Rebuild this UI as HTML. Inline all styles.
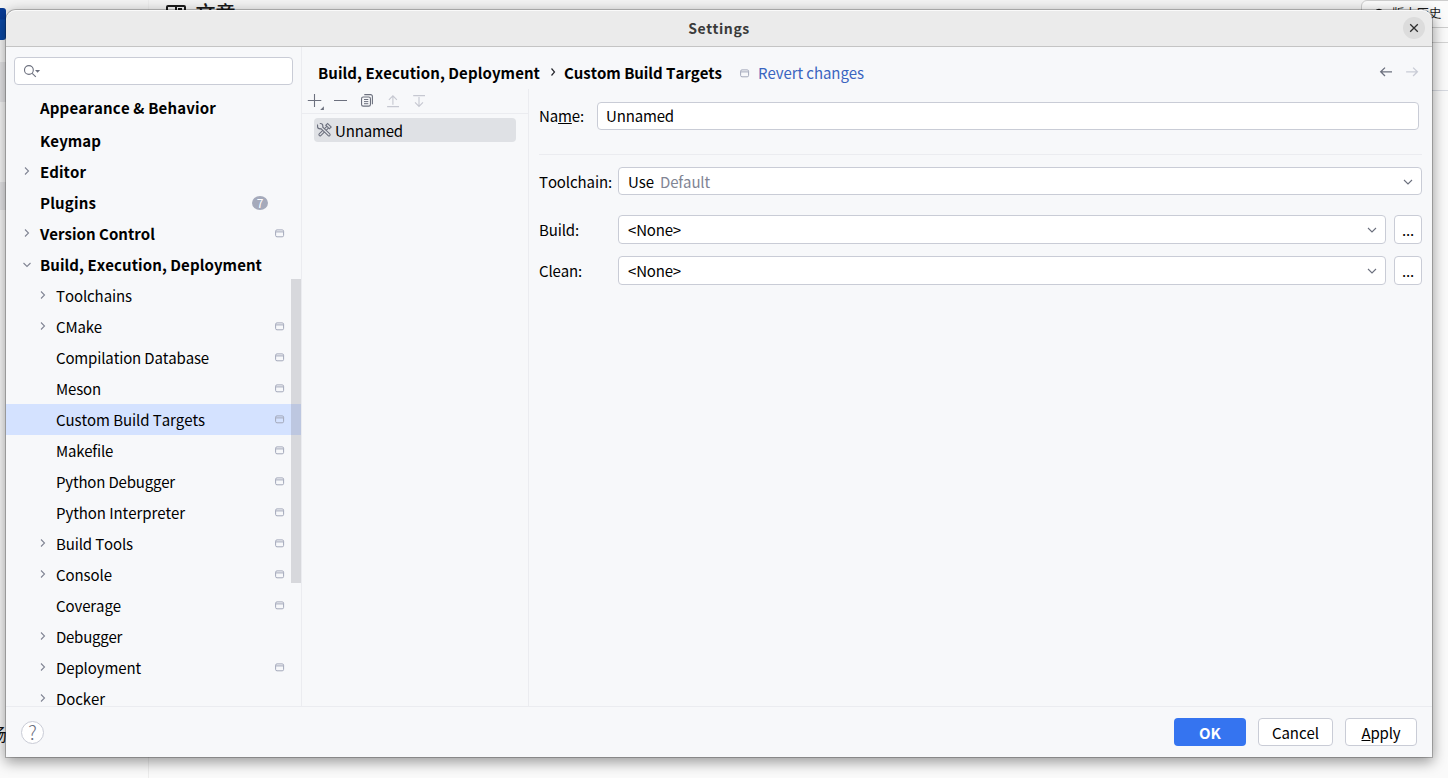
<!DOCTYPE html>
<html lang="en">
<head>
<meta charset="utf-8">
<title>Settings</title>
<style>
*{box-sizing:border-box;margin:0;padding:0}
html,body{width:1448px;height:778px;overflow:hidden;background:#fff}
body{font-family:"Noto Sans CJK SC","Liberation Sans",sans-serif;font-size:15px;color:#000;position:relative;font-kerning:none}
#bg{position:absolute;left:0;top:0;width:1448px;height:778px;background:#fafafa;overflow:hidden}
#bg div{position:absolute}
#dlg{position:absolute;left:6px;top:10px;width:1426px;height:747px;background:#f7f8fa;border-radius:10px 10px 0 0;box-shadow:0 0 0 1px rgba(0,0,0,.22),0 4px 14px 1px rgba(0,0,0,.40);overflow:hidden}
#in{position:absolute;left:-6px;top:-10px;width:1448px;height:778px}
#in div,#in span.t,#in svg{position:absolute}
#title{left:6px;top:10px;width:1426px;height:37px;background:#ebebeb;border-bottom:1px solid #c4c4c4;text-align:center;font-weight:bold;font-size:14px;line-height:37px;color:#3a3a3a;letter-spacing:.55px;box-shadow:inset 0 1px 0 rgba(255,255,255,.75);border-radius:10px 10px 0 0}
.t{white-space:nowrap;line-height:22px;height:22px}
.b{font-weight:bold}
.box{background:#fff;border:1px solid #c9ccd6;border-radius:4px}
.ln{background:#ebecf0}
.btn{height:28px;border-radius:4px;text-align:center;line-height:28px;font-size:15px}
u{text-decoration:underline;text-underline-offset:1px;text-decoration-thickness:1px}
</style>
</head>
<body>
<div id="bg">
  <div style="left:0;top:0;width:1448px;height:12px;background:#f3f3f3"></div>
  <div style="left:148px;top:0;width:1px;height:778px;background:#ececec"></div>
  <div style="left:0;top:8px;width:5.500px;height:32px;background:linear-gradient(#073a94 0,#073a94 11px,#0a49a6 12px);border-radius:0 3px 3px 0"></div>
  <div style="left:166px;top:5px;width:20px;height:20px;border:2px solid #1a1a1a;border-radius:2px"></div>
  <div style="left:175px;top:5px;width:2px;height:20px;background:#1a1a1a"></div>
  <div style="left:178px;top:8px;width:4px;height:2px;background:#1a1a1a"></div>
  <div style="left:195.500px;top:3px;font-size:20px;line-height:20px;color:#1a1a1a;white-space:nowrap;font-weight:500">文章</div>
  <div style="left:1361px;top:0;width:100px;height:28px;border:1px solid #cdcdcd;border-radius:6px;background:#fbfbfb"></div>
  <div style="left:0;top:62px;width:6px;height:40px;background:rgba(0,0,30,.07)"></div>
  <div style="left:0;top:182px;width:6px;height:28px;background:rgba(0,0,30,.07)"></div>
  <div style="left:1400px;top:42px;width:60px;height:1px;background:#d2d2d2"></div>
  <div style="left:1400px;top:90px;width:60px;height:1px;background:#d6d9e0"></div>
  <svg style="position:absolute;left:1373px;top:7.500px" width="12" height="12" viewBox="0 0 12 12"><circle cx="6" cy="6" r="4.600" fill="none" stroke="#1a1a1a" stroke-width="1.2"/><path d="M6 3.500v3l2 1" fill="none" stroke="#1a1a1a" stroke-width="1.1"/></svg>
  <div style="left:1392px;top:4px;font-size:12.300px;line-height:18px;color:#1a1a1a;white-space:nowrap">版本历史</div>
  <div style="left:-9.800px;top:723px;font-size:16.500px;line-height:22px;color:#111">场</div>
</div>
<div id="dlg"><div id="in">
  <div id="title">Settings</div>
  <div style="left:1403px;top:17px;width:22px;height:22px;border-radius:11px;background:#dcdcdc"></div>
  <svg style="left:1402px;top:16px" width="24" height="24" viewBox="0 0 24 24"><path d="M8.200 8.200l7.600 7.600M15.800 8.200l-7.600 7.600" stroke="#2e2e2e" stroke-width="1.300" fill="none"/></svg>

  <div class="ln" style="left:301px;top:47px;width:1px;height:659px"></div>
  <div class="box" style="left:14px;top:57px;width:279px;height:28px"></div>
  <svg style="left:20px;top:60px" width="24" height="22" viewBox="20 60 24 22" fill="none"><circle cx="28.900" cy="70" r="4.400" stroke="#6c707e" stroke-width="1.100"/><path d="M32.200 73.300L35.800 76.800" stroke="#6c707e" stroke-width="1.100"/><path d="M35 70H40.100L37.550 72.700z" fill="#6c707e"/></svg>
  <div style="left:6px;top:404px;width:295px;height:31px;background:#d4e2ff"></div>
  <div style="left:291px;top:279px;width:10px;height:304px;background:rgba(120,120,130,.25)"></div>
  <span class="t b" style="left:40px;top:97px;letter-spacing:0.162px">Appearance &amp; Behavior</span>
  <span class="t b" style="left:40px;top:130px;letter-spacing:0.067px">Keymap</span>
  <span class="t b" style="left:40px;top:161px;letter-spacing:0.052px">Editor</span>
  <svg style="left:22px;top:165px" width="10" height="12" viewBox="0 0 10 12"><path d="M3 2.5l3.5 3.5L3 9.5" fill="none" stroke="#818594" stroke-width="1.1"/></svg>
  <span class="t b" style="left:40px;top:192px;letter-spacing:0.166px">Plugins</span>
  <div style="left:252px;top:196px;width:16px;height:14px;border-radius:8px/7px;background:#a5aabb;color:#fff;font-size:12px;line-height:14px;text-align:center">7</div>
  <span class="t b" style="left:40px;top:223px;letter-spacing:0.017px">Version Control</span>
  <svg style="left:22px;top:227px" width="10" height="12" viewBox="0 0 10 12"><path d="M3 2.5l3.5 3.5L3 9.5" fill="none" stroke="#818594" stroke-width="1.1"/></svg>
  <svg style="left:275px;top:229px" width="10" height="10" viewBox="0 0 10 10"><rect x=".6" y=".9" width="8" height="6.900" rx="1.400" fill="none" stroke="#a3a8ba" stroke-width="1"/><path d="M.6 2.900h8" stroke="#a3a8ba" stroke-width="1"/></svg>
  <span class="t b" style="left:40px;top:254px;letter-spacing:0.075px">Build, Execution, Deployment</span>
  <svg style="left:21px;top:260px" width="12" height="10" viewBox="0 0 12 10"><path d="M2.5 3l3.5 3.5L9.5 3" fill="none" stroke="#818594" stroke-width="1.1"/></svg>
  <span class="t" style="left:56px;top:285px;letter-spacing:-0.092px">Toolchains</span>
  <svg style="left:38px;top:289px" width="10" height="12" viewBox="0 0 10 12"><path d="M3 2.5l3.5 3.5L3 9.5" fill="none" stroke="#818594" stroke-width="1.1"/></svg>
  <span class="t" style="left:56px;top:316px;letter-spacing:-0.157px">CMake</span>
  <svg style="left:38px;top:320px" width="10" height="12" viewBox="0 0 10 12"><path d="M3 2.5l3.5 3.5L3 9.5" fill="none" stroke="#818594" stroke-width="1.1"/></svg>
  <svg style="left:275px;top:322px" width="10" height="10" viewBox="0 0 10 10"><rect x=".6" y=".9" width="8" height="6.900" rx="1.400" fill="none" stroke="#a3a8ba" stroke-width="1"/><path d="M.6 2.900h8" stroke="#a3a8ba" stroke-width="1"/></svg>
  <span class="t" style="left:56px;top:347px;letter-spacing:-0.148px">Compilation Database</span>
  <svg style="left:275px;top:353px" width="10" height="10" viewBox="0 0 10 10"><rect x=".6" y=".9" width="8" height="6.900" rx="1.400" fill="none" stroke="#a3a8ba" stroke-width="1"/><path d="M.6 2.900h8" stroke="#a3a8ba" stroke-width="1"/></svg>
  <span class="t" style="left:56px;top:378px;letter-spacing:-0.15px">Meson</span>
  <svg style="left:275px;top:384px" width="10" height="10" viewBox="0 0 10 10"><rect x=".6" y=".9" width="8" height="6.900" rx="1.400" fill="none" stroke="#a3a8ba" stroke-width="1"/><path d="M.6 2.900h8" stroke="#a3a8ba" stroke-width="1"/></svg>
  <span class="t" style="left:56px;top:409px;letter-spacing:-0.07px">Custom Build Targets</span>
  <svg style="left:275px;top:415px" width="10" height="10" viewBox="0 0 10 10"><rect x=".6" y=".9" width="8" height="6.900" rx="1.400" fill="none" stroke="#a3a8ba" stroke-width="1"/><path d="M.6 2.900h8" stroke="#a3a8ba" stroke-width="1"/></svg>
  <span class="t" style="left:56px;top:440px;letter-spacing:-0.223px">Makefile</span>
  <svg style="left:275px;top:446px" width="10" height="10" viewBox="0 0 10 10"><rect x=".6" y=".9" width="8" height="6.900" rx="1.400" fill="none" stroke="#a3a8ba" stroke-width="1"/><path d="M.6 2.900h8" stroke="#a3a8ba" stroke-width="1"/></svg>
  <span class="t" style="left:56px;top:471px;letter-spacing:-0.182px">Python Debugger</span>
  <svg style="left:275px;top:477px" width="10" height="10" viewBox="0 0 10 10"><rect x=".6" y=".9" width="8" height="6.900" rx="1.400" fill="none" stroke="#a3a8ba" stroke-width="1"/><path d="M.6 2.900h8" stroke="#a3a8ba" stroke-width="1"/></svg>
  <span class="t" style="left:56px;top:502px;letter-spacing:-0.068px">Python Interpreter</span>
  <svg style="left:275px;top:508px" width="10" height="10" viewBox="0 0 10 10"><rect x=".6" y=".9" width="8" height="6.900" rx="1.400" fill="none" stroke="#a3a8ba" stroke-width="1"/><path d="M.6 2.900h8" stroke="#a3a8ba" stroke-width="1"/></svg>
  <span class="t" style="left:56px;top:533px;letter-spacing:-0.132px">Build Tools</span>
  <svg style="left:38px;top:537px" width="10" height="12" viewBox="0 0 10 12"><path d="M3 2.5l3.5 3.5L3 9.5" fill="none" stroke="#818594" stroke-width="1.1"/></svg>
  <svg style="left:275px;top:539px" width="10" height="10" viewBox="0 0 10 10"><rect x=".6" y=".9" width="8" height="6.900" rx="1.400" fill="none" stroke="#a3a8ba" stroke-width="1"/><path d="M.6 2.900h8" stroke="#a3a8ba" stroke-width="1"/></svg>
  <span class="t" style="left:56px;top:564px;letter-spacing:-0.07px">Console</span>
  <svg style="left:38px;top:568px" width="10" height="12" viewBox="0 0 10 12"><path d="M3 2.5l3.5 3.5L3 9.5" fill="none" stroke="#818594" stroke-width="1.1"/></svg>
  <svg style="left:275px;top:570px" width="10" height="10" viewBox="0 0 10 10"><rect x=".6" y=".9" width="8" height="6.900" rx="1.400" fill="none" stroke="#a3a8ba" stroke-width="1"/><path d="M.6 2.900h8" stroke="#a3a8ba" stroke-width="1"/></svg>
  <span class="t" style="left:56px;top:595px;letter-spacing:-0.103px">Coverage</span>
  <svg style="left:275px;top:601px" width="10" height="10" viewBox="0 0 10 10"><rect x=".6" y=".9" width="8" height="6.900" rx="1.400" fill="none" stroke="#a3a8ba" stroke-width="1"/><path d="M.6 2.900h8" stroke="#a3a8ba" stroke-width="1"/></svg>
  <span class="t" style="left:56px;top:626px;letter-spacing:-0.257px">Debugger</span>
  <svg style="left:38px;top:630px" width="10" height="12" viewBox="0 0 10 12"><path d="M3 2.5l3.5 3.5L3 9.5" fill="none" stroke="#818594" stroke-width="1.1"/></svg>
  <span class="t" style="left:56px;top:657px;letter-spacing:-0.11px">Deployment</span>
  <svg style="left:38px;top:661px" width="10" height="12" viewBox="0 0 10 12"><path d="M3 2.5l3.5 3.5L3 9.5" fill="none" stroke="#818594" stroke-width="1.1"/></svg>
  <svg style="left:275px;top:663px" width="10" height="10" viewBox="0 0 10 10"><rect x=".6" y=".9" width="8" height="6.900" rx="1.400" fill="none" stroke="#a3a8ba" stroke-width="1"/><path d="M.6 2.900h8" stroke="#a3a8ba" stroke-width="1"/></svg>
  <span class="t" style="left:56px;top:688px;letter-spacing:-0.078px">Docker</span>
  <svg style="left:38px;top:692px" width="10" height="12" viewBox="0 0 10 12"><path d="M3 2.5l3.5 3.5L3 9.5" fill="none" stroke="#818594" stroke-width="1.1"/></svg>
  <div style="left:6px;top:706px;width:1426px;height:51px;background:#f7f8fa"></div>
  <div class="ln" style="left:6px;top:706px;width:1426px;height:1px"></div>
  <div style="left:21px;top:721px;width:23px;height:23px;border-radius:12px;background:#fff;border:1px solid #c9ccd6;color:#6c707e;text-align:center;font-size:19px;font-weight:300;line-height:19px">?</div>
  <span class="t b" style="left:318px;top:62px;letter-spacing:0.075px">Build, Execution, Deployment</span>
  <svg style="left:548px;top:66px" width="10" height="12" viewBox="0 0 10 12"><path d="M3.5 2.5l3 3.5-3 3.5" fill="none" stroke="#27282e" stroke-width="1.200"/></svg>
  <span class="t b" style="left:564px;top:62px;letter-spacing:-0.035px">Custom Build Targets</span>
  <svg style="left:740px;top:68.500px" width="10" height="10" viewBox="0 0 10 10"><rect x=".6" y=".9" width="8" height="6.900" rx="1.400" fill="none" stroke="#a3a8ba" stroke-width="1"/><path d="M.6 2.900h8" stroke="#a3a8ba" stroke-width="1"/></svg>
  <span class="t" style="left:758px;top:62px;letter-spacing:-0.067px;color:#3a64c0">Revert changes</span>
  <svg style="left:1376px;top:62px" width="48" height="20" viewBox="1376 62 48 20" fill="none" stroke-width="1.300"><path d="M1392 71.800H1380.700M1385 67.600L1380.700 71.800L1385 76" stroke="#6c707e"/><path d="M1406.100 71.800H1417.400M1413.100 67.600L1417.400 71.800L1413.100 76" stroke="#c9ccd6"/></svg>
  <div class="ln" style="left:302px;top:113px;width:226px;height:1px"></div>
  <div class="ln" style="left:528px;top:89px;width:1px;height:617px"></div>
  <svg style="left:302px;top:88px" width="130" height="26" viewBox="302 88 130 26" fill="none" stroke-width="1.1"><g stroke="#6c707e"><path d="M307.800 100.500H321.300M314.500 94V107"/><path d="M334 100.500H347"/><rect x="361.550" y="97.050" width="8.900" height="9.100" rx="1.700"/><path d="M364.300 94.650H370.600a1.800 1.800 0 0 1 1.800 1.800V104.300"/><path d="M364 99.500H368.300M364 101.600H368.300M364 103.700H368.300" stroke-width="1"/></g><path d="M323.900 106.200V109.900H320.200z" fill="#6c707e" stroke="none"/><g stroke="#c6c8d1"><path d="M392.900 95.900V104.700M388.900 99.800L392.900 95.800L396.900 99.800M387.100 106.600H399"/><path d="M413.200 95.600H425M419 97V106.300M415 102.400L419 106.400L423 102.400"/></g></svg>
  <div style="left:314px;top:118px;width:202px;height:24px;border-radius:4px;background:#dfe1e5"></div>
  <svg style="left:314px;top:120px" width="20" height="20" viewBox="314 120 20 20" fill="none"><path d="M327.600 127.300L320 134.700" stroke="#6c707e" stroke-width="3.300" stroke-linecap="round"/><path d="M327.600 127.300L320 134.700" stroke="#dfe1e5" stroke-width="1.200" stroke-linecap="round"/><path d="M326.300 123.900L330.700 128.300" stroke="#6c707e" stroke-width="3.600"/><path d="M327.100 124.700L329.900 127.500" stroke="#dfe1e5" stroke-width="1.400"/><path d="M321.200 127.300L329 134.800" stroke="#6c707e" stroke-width="3.300" stroke-linecap="round"/><circle cx="320.200" cy="126.200" r="2.700" fill="#dfe1e5" stroke="#6c707e" stroke-width="1.100"/><path d="M321.200 127.300L329 134.800" stroke="#dfe1e5" stroke-width="1.200" stroke-linecap="round"/><path d="M320.200 126.200L318 122.800" stroke="#dfe1e5" stroke-width="2.200"/></svg>
  <span class="t" style="left:335px;top:120px;letter-spacing:-0.151px">Unnamed</span>
  <span class="t" style="left:539px;top:105px;letter-spacing:-0.132px">Na<u>m</u>e:</span>
  <div class="box" style="left:597px;top:102px;width:822px;height:28px"></div>
  <span class="t" style="left:606px;top:105px;letter-spacing:-0.151px">Unnamed</span>
  <div class="ln" style="left:539px;top:154px;width:883px;height:1px"></div>
  <span class="t" style="left:539px;top:171px;letter-spacing:-0.107px">Toolchain:</span>
  <div class="box" style="left:618px;top:167px;width:804px;height:28px"></div>
  <span class="t" style="left:628px;top:171px;letter-spacing:-0.048px">Use</span>
  <span class="t" style="left:660px;top:171px;letter-spacing:-0.139px;color:#818594">Default</span>
  <svg style="left:1402px;top:177px" width="12" height="10" viewBox="0 0 12 10"><path d="M2 3l4 4 4-4" fill="none" stroke="#6c707e" stroke-width="1.1"/></svg>
  <span class="t" style="left:539px;top:219px;letter-spacing:-0.136px">Build:</span>
  <div class="box" style="left:618px;top:215px;width:768px;height:29px"></div>
  <span class="t" style="left:628px;top:219px;letter-spacing:-0.174px">&lt;None&gt;</span>
  <svg style="left:1366px;top:225px" width="12" height="10" viewBox="0 0 12 10"><path d="M2 3l4 4 4-4" fill="none" stroke="#6c707e" stroke-width="1.1"/></svg>
  <div class="box" style="left:1394px;top:215px;width:28px;height:29px"></div>
  <span class="t" style="left:1402px;top:219px;letter-spacing:-0.17px">...</span>
  <span class="t" style="left:539px;top:260px;letter-spacing:-0.151px">Clean:</span>
  <div class="box" style="left:618px;top:256px;width:768px;height:29px"></div>
  <span class="t" style="left:628px;top:260px;letter-spacing:-0.174px">&lt;None&gt;</span>
  <svg style="left:1366px;top:266px" width="12" height="10" viewBox="0 0 12 10"><path d="M2 3l4 4 4-4" fill="none" stroke="#6c707e" stroke-width="1.1"/></svg>
  <div class="box" style="left:1394px;top:256px;width:28px;height:29px"></div>
  <span class="t" style="left:1402px;top:260px;letter-spacing:-0.17px">...</span>
  <div class="btn" style="left:1174px;top:718px;width:72px;background:#3574f0;color:#fff;font-weight:bold;line-height:30px;letter-spacing:0.08px">OK</div>
  <div class="btn box" style="left:1258px;top:718px;width:75px;letter-spacing:-0.064px">Cancel</div>
  <div class="btn box" style="left:1345px;top:718px;width:72px;letter-spacing:-0.159px"><u>A</u>pply</div>
</div></div>
</body>
</html>
